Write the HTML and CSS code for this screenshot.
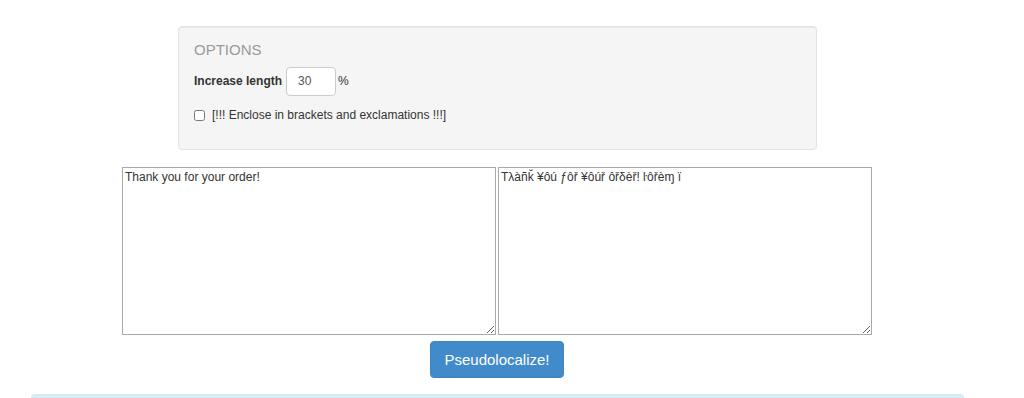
FILE: index.html
```html
<!DOCTYPE html>
<html>
<head>
<meta charset="utf-8">
<link rel="stylesheet" href="styles.css">
</head>
<body>
<div class="page">
  <div class="well">
    <div class="well-title">OPTIONS</div>
    <div class="row-length">
      <label class="lbl">Increase length</label>
      <input class="num" type="text" value="30">
      <span class="pct">%</span>
    </div>
    <label class="check">
      <input type="checkbox" class="cb">
      <span>[!!! Enclose in brackets and exclamations !!!]</span>
    </label>
  </div>
  <div class="areas">
    <textarea class="ta">Thank you for your order!</textarea>
    <textarea class="ta">Tλàñǩ ¥ôú ƒôř ¥ôúř ôřδèř! ŀôřèɱ ï</textarea>
  </div>
  <div class="actions">
    <button class="btn">Pseudolocalize!</button>
  </div>
  <div class="info"></div>
</div>
</body>
</html>
```

FILE: styles.css
```css
html, body {
  margin: 0;
  padding: 0;
  background: #fff;
}
body {
  font-family: "Liberation Sans", Arial, sans-serif;
  font-size: 12px;
  color: #333;
  overflow: hidden;
  height: 398px;
}
.page {
  width: 994px;
  display: flex;
  flex-direction: column;
  align-items: center;
  padding-top: 26px;
}
.well {
  box-sizing: border-box;
  width: 639px;
  height: 124px;
  margin-left: 1px;
  background: #f5f5f5;
  border: 1px solid #e3e3e3;
  border-radius: 4px;
  box-shadow: inset 0 1px 1px rgba(0,0,0,0.05);
  padding: 13px 15px 0 15px;
}
.well-title {
  font-size: 15px;
  color: #9a9a9a;
  line-height: 20px;
}
.row-length {
  display: flex;
  align-items: center;
  margin-top: 7px;
  height: 28px;
}
.lbl {
  font-weight: bold;
  font-size: 12px;
  color: #333;
  margin-right: 4px;
}
.num {
  box-sizing: border-box;
  width: 50px;
  height: 29px;
  border: 1px solid #ccc;
  border-radius: 4px;
  padding: 0 0 0 11px;
  font-family: "Liberation Sans", Arial, sans-serif;
  font-size: 12px;
  color: #555;
  background: #fff;
  margin: 0;
}
.pct {
  margin-left: 2px;
  color: #333;
}
.check {
  display: flex;
  align-items: center;
  margin-top: 13px;
  font-size: 12px;
  color: #333;
}
.cb {
  width: 11px;
  height: 11px;
  margin: 0 7px 0 0;
}
.areas {
  display: flex;
  gap: 2px;
  margin-top: 17px;
}
.ta {
  box-sizing: border-box;
  width: 374px;
  height: 168px;
  margin: 0;
  border: 1px solid #a9a9a9;
  padding: 2px;
  font-family: "Liberation Sans", Arial, sans-serif;
  font-size: 12px;
  color: #333;
  resize: both;
  background: #fff;
}
.actions {
  margin-top: 6px;
}
.btn {
  box-sizing: border-box;
  width: 134px;
  height: 37px;
  background: #428bca;
  border: 1px solid #3f86c4;
  border-radius: 4px;
  color: #fff;
  font-family: "Liberation Sans", Arial, sans-serif;
  font-size: 15px;
  padding: 0;
}
.info {
  box-sizing: border-box;
  width: 933px;
  height: 4px;
  margin-top: 16px;
  background: #d9edf7;
  border: 1px solid #d3e8f3;
  border-bottom: 0;
  border-radius: 4px 4px 0 0;
}
```
